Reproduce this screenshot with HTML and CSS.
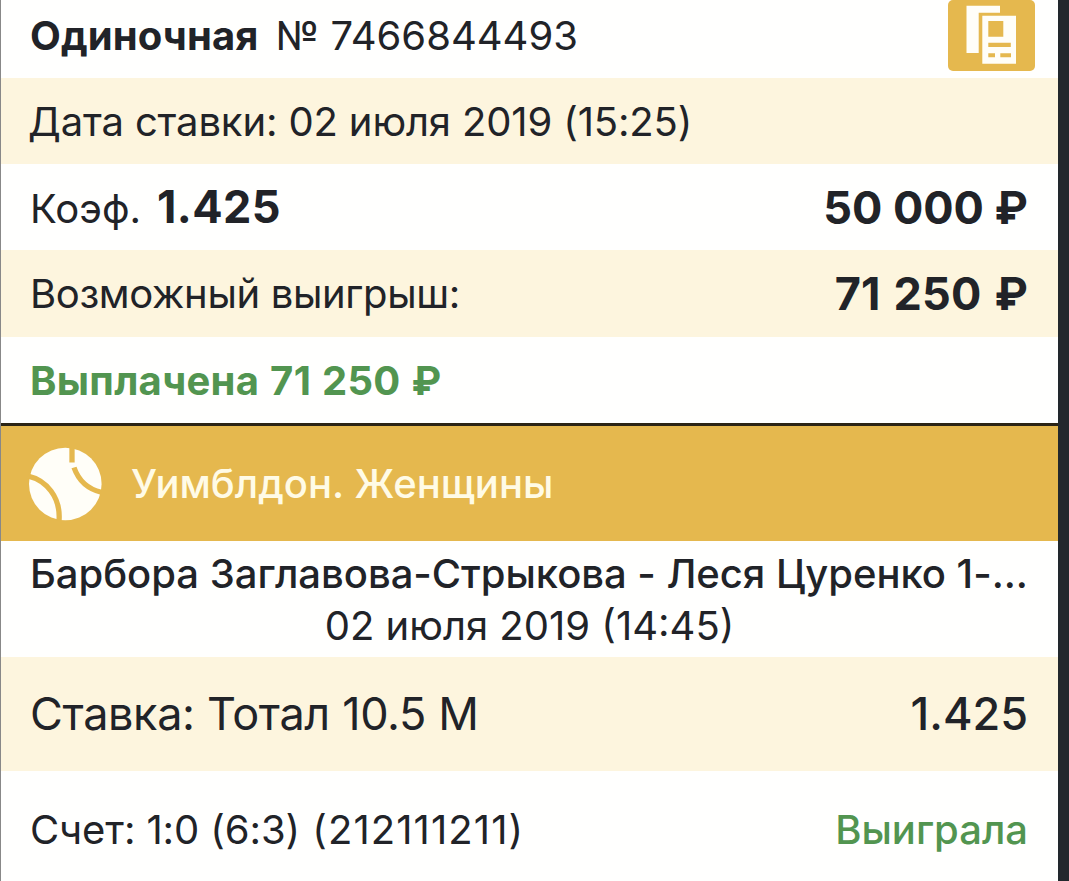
FILE: index.html
```html
<!DOCTYPE html>
<html lang="ru">
<head>
    <meta charset="UTF-8">
    <meta name="viewport" content="width=device-width, initial-scale=1.0">
    <title>Одиночная № 7466844493</title>
    <link rel="stylesheet" href="styles.css">
</head>
<body>

<div class="coupon">

    <!-- Coupon info -->
    <div class="row row-top">
        <div><b class="type">Одиночная</b><span class="number">№ 7466844493</span></div>
        <button class="copy" aria-label="Копировать">
            <svg width="87" height="71" viewBox="0 0 87 71">
                <path fill="#fffef8" d="M18.500 5.700H52v7H30.700V53H18.500z"/>
                <path fill="#fffef8" d="M34.300 15.700H68v48H34.300z"/>
                <path fill="#e5b84e" d="M40.300 21h15v15.700h-15zM40.300 42.700h22.500V47H40.300zM40.300 53.300H47v4h-6.700zM52.300 53.300H63v4H52.300z"/>
            </svg>
        </button>
    </div>
    <div class="row row-cream"><span class="date">Дата ставки: 02 июля 2019 (15:25)</span></div>
    <div class="row">
        <div><span class="coef-label">Коэф.</span><b class="coef">1.425</b></div>
        <b class="sum">50 000 ₽</b>
    </div>
    <div class="row row-cream row-possible">
        <span class="possible">Возможный выигрыш:</span>
        <b class="sum sum-win">71 250 ₽</b>
    </div>
    <div class="row"><b class="paid">Выплачена 71 250 ₽</b></div>

    <!-- Tournament -->
    <div class="tournament">
        <svg class="ball" width="74" height="74" viewBox="0 0 74 74">
            <circle cx="37.300" cy="37" r="36.300" fill="#fffef8"/>
            <path d="M0 29C18 33 33 50 31 74M44 0L44 15.500M46 20.500C50 32 59 42 74 45.500" fill="none" stroke="#e5b84e" stroke-width="5.300"/>
        </svg>
        <span class="tournament-name">Уимблдон. Женщины</span>
    </div>

    <!-- Event -->
    <div class="event">
        <div class="teams">Барбора Заглавова-Стрыкова - Леся Цуренко 1-...</div>
        <div class="event-date">02 июля 2019 (14:45)</div>
    </div>
    <div class="row row-cream row-bet">
        <span class="bet">Ставка: Тотал 10.5 М</span>
        <span class="bet-coef">1.425</span>
    </div>
    <div class="row row-score">
        <span class="score">Счет: 1:0 (6:3) <span class="games">(212111211)</span></span>
        <span class="result">Выиграла</span>
    </div>

</div>

</body>
</html>
```
FILE: styles.css
```css
body {
    margin: 0;
    height: 881px;
    overflow: hidden;
    background-color: #22282d;
    color: #212328;
    font-family: Inter, "Liberation Sans", sans-serif;
    font-size: 40px;
    line-height: 48px;
}

.coupon {
    box-sizing: border-box;
    width: 1058px;
    height: 881px;
    overflow: hidden;
    border-left: 1px solid #888;
    background-color: #fffffe;
    white-space: nowrap;
}

b {
    font-weight: 700;
}

.row {
    display: flex;
    justify-content: space-between;
    align-items: center;
    box-sizing: border-box;
    height: 86px;
    padding: 1px 30px 0 29px;
}

.row-cream {
    background-color: #fdf5de;
}

.row-top {
    height: 78px;
    padding: 0 23px 7px 29px;
}

.type {
    letter-spacing: 0.1px;
}

.number {
    margin-left: 17px;
}

.copy {
    width: 87px;
    height: 71px;
    padding: 0;
    border: none;
    border-radius: 5px;
    background-color: #e5b84e;
}

.copy svg {
    display: block;
}

.date {
    margin-left: -2px;
    letter-spacing: -0.14px;
}

.coef-label {
    margin-right: 16px;
}

.coef,
.sum {
    font-size: 45px;
}

.coef {
    letter-spacing: 0.4px;
}

.row-possible {
    height: 87px;
}

.possible {
    letter-spacing: -0.35px;
}

.sum-win {
    letter-spacing: 0.2px;
    word-spacing: 2px;
}

.paid {
    color: #529550;
    letter-spacing: 0.3px;
    word-spacing: 1px;
}

/* Tournament */
.tournament {
    display: flex;
    align-items: center;
    box-sizing: border-box;
    height: 118px;
    padding-left: 27px;
    border-top: 3px solid #2b2415;
    background-color: #e5b84e;
}

.tournament-name {
    margin-left: 29px;
    color: #fffbe6;
    font-weight: 500;
}

/* Event */
.event {
    box-sizing: border-box;
    height: 116px;
    padding: 7px 29px 0;
    line-height: 52px;
    text-align: center;
}

.teams {
    font-weight: 500;
    letter-spacing: -0.03px;
    text-align: left;
}

.row-bet {
    height: 114px;
    padding: 0 30px 1px 29px;
    font-size: 45px;
}

.bet {
    letter-spacing: -0.35px;
}

.bet-coef {
    font-weight: 500;
}

.row-score {
    height: 118px;
    padding: 0 30px 1px 29px;
}

.score {
    letter-spacing: -0.1px;
}

.games {
    margin-left: 1px;
    letter-spacing: 1.1px;
}

.result {
    color: #529550;
    font-weight: 500;
}
```
